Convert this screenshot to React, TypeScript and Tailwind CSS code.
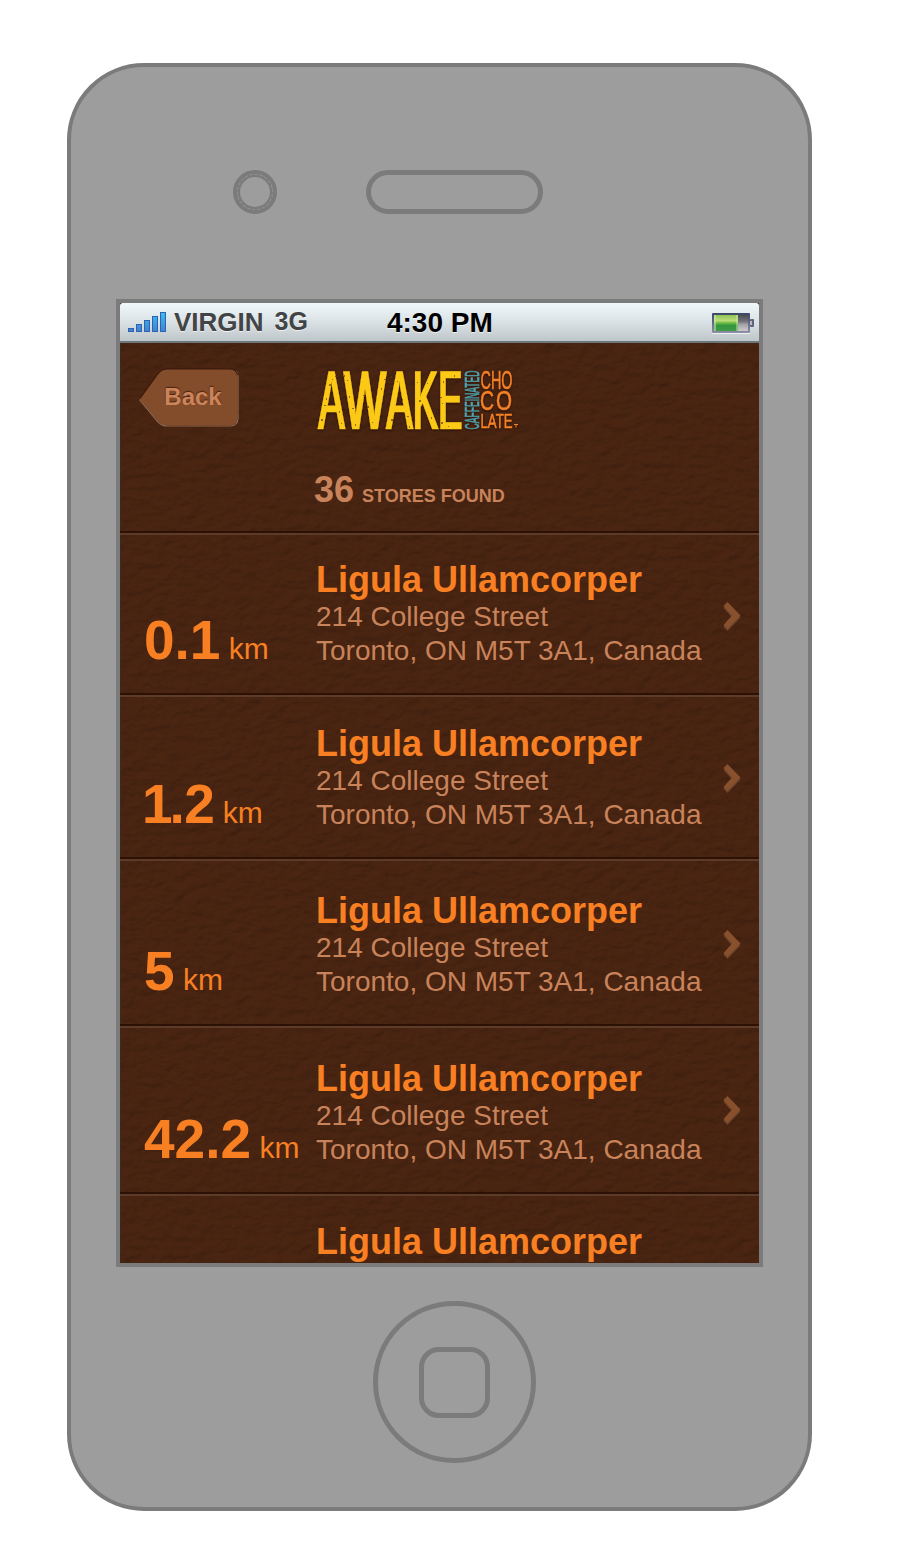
import type { ReactNode } from "react";

type Store = {
  distance: ReactNode;
  height: string;
  pad: string;
  chevron: string;
};

const STORES: Store[] = [
  { distance: "0.1", height: "h-[162px]", pad: "pt-[27px]", chevron: "mt-[67px]" },
  {
    distance: (
      <>
        <span className="-ml-[2px] -tracking-[3px]">1</span>
        <span className="-tracking-[0.5px]">.2</span>
      </>
    ),
    height: "h-[164px]",
    pad: "pt-[29px]",
    chevron: "mt-[67px]",
  },
  { distance: "5", height: "h-[167px]", pad: "pt-[32px]", chevron: "mt-[69px]" },
  { distance: "42.2", height: "h-[168px]", pad: "pt-[33px]", chevron: "mt-[68px]" },
];

function Leather() {
  return (
    <svg className="absolute inset-0 h-full w-full" aria-hidden="true">
      <filter id="leather" x="0" y="0" width="100%" height="100%" colorInterpolationFilters="sRGB">
        <feTurbulence type="fractalNoise" baseFrequency="0.075 0.11" numOctaves="3" seed="8" />
        <feColorMatrix values="0 0 0 0 0  0 0 0 0 0  0 0 0 0 0  1 0 0 0 0" />
        <feDiffuseLighting surfaceScale="1.6" diffuseConstant="1.1" lightingColor="#4b2714">
          <feDistantLight azimuth="240" elevation="66" />
        </feDiffuseLighting>
      </filter>
      <rect width="100%" height="100%" fill="#45210f" />
      <rect width="100%" height="100%" filter="url(#leather)" opacity="0.5" />
    </svg>
  );
}

function Signal() {
  return (
    <svg width="38" height="20" viewBox="0 0 38 20" className="mt-[9px]">
      <defs>
        <linearGradient id="sig" x1="0" y1="0" x2="0" y2="20" gradientUnits="userSpaceOnUse">
          <stop offset="0" stopColor="#3dc0f0" />
          <stop offset="1" stopColor="#3f7fd0" />
        </linearGradient>
      </defs>
      {[4, 8, 12, 16, 20].map((h, i) => (
        <rect key={h} x={i * 8 + 0.5} y={20 - h + 0.5} width="5" height={h - 1} fill="url(#sig)" stroke="#2f62b0" />
      ))}
    </svg>
  );
}

function Battery() {
  return (
    <svg width="43" height="22" viewBox="0 0 43 22" className="mt-[10px] ml-auto">
      <defs>
        <linearGradient id="charge" x1="0" y1="0" x2="0" y2="1">
          <stop offset="0" stopColor="#8fc457" />
          <stop offset="0.35" stopColor="#bbdd79" />
          <stop offset="0.5" stopColor="#6dbb42" />
          <stop offset="0.65" stopColor="#339640" />
          <stop offset="1" stopColor="#3f9b45" />
        </linearGradient>
        <linearGradient id="empty" x1="0" y1="0" x2="0" y2="1">
          <stop offset="0" stopColor="#4c4c50" />
          <stop offset="0.4" stopColor="#737377" />
          <stop offset="0.6" stopColor="#a5a5a8" />
          <stop offset="1" stopColor="#cbcbcd" />
        </linearGradient>
        <linearGradient id="shell" x1="0" y1="0" x2="0" y2="1">
          <stop offset="0" stopColor="#3c4664" />
          <stop offset="1" stopColor="#8e8fa8" />
        </linearGradient>
      </defs>
      <rect x="38" y="6" width="4" height="8" rx="1" fill="#60657b" />
      <rect x="38" y="8" width="2" height="4" fill="#b8bbc5" />
      <rect x="0" y="0" width="38" height="20" rx="1" fill="url(#shell)" />
      <rect x="2" y="2" width="24" height="16" fill="url(#charge)" />
      <rect x="2" y="2" width="2" height="16" fill="#c9edae" opacity="0.55" />
      <rect x="24" y="2" width="2" height="16" fill="#c9edae" opacity="0.45" />
      <rect x="26" y="2" width="10" height="16" fill="url(#empty)" />
      <rect x="0" y="20" width="38" height="1" fill="#ffffff" opacity="0.7" />
    </svg>
  );
}

function BackButton() {
  return (
    <button className="relative mt-[24px] ml-[18px] h-[62px] w-[102px]">
      <svg width="102" height="62" viewBox="0 0 102 62" className="absolute inset-0">
        <path
          d="M1.500 32.500 L20 55 Q24 59 29 59 H92 Q100 59 100 51 V10 Q100 6 98 4"
          fill="none"
          stroke="#8b6853"
          strokeWidth="1.200"
        />
        <path
          d="M1.500 32 L20 6.500 Q24 2 29 2 H92 Q99.500 2 99.500 10 V50 Q99.500 58.500 92 58.500 H29 Q24 58.500 20 54 Z"
          fill="#834c2b"
        />
        <path d="M2 31.500 L20 6.500 Q24 2 29 2 H92 Q98 2 99.500 8" fill="none" stroke="#3a190a" strokeWidth="1.200" />
      </svg>
      <span className="relative left-[4px] text-[24px] leading-[24px] font-bold text-[#cb845b] [text-shadow:0_-1px_1px_#4a230d]">
        Back
      </span>
    </button>
  );
}

const SPECKS = [
  [13, 13], [16, 8], [10, 27], [8, 34], [23, 40], [25, 52], [5, 48], [31, 9], [33, 25], [36, 37], [39, 53],
  [47, 24], [51, 35], [56, 51], [65, 17], [68, 8], [75, 5], [71, 38], [75, 48], [81, 10], [86, 28], [91, 45],
  [93, 55], [101, 11], [103, 29], [111, 12], [115, 46], [124, 26], [127, 10], [126, 32], [125, 51], [132, 55],
  [138, 4], [19, 5], [28, 4], [88, 6],
];

function Logo() {
  const letters = [
    { c: "A", x: 2.5, w: 26 },
    { c: "W", x: 28, w: 42 },
    { c: "A", x: 70.5, w: 26 },
    { c: "K", x: 97, w: 25 },
    { c: "E", x: 122.5, w: 23.5 },
  ];
  return (
    <svg
      width="206"
      height="66"
      viewBox="0 0 206 66"
      className="mt-[26px] ml-[76px] overflow-visible [filter:drop-shadow(0_1px_1px_#2b1005)]"
      fontFamily="'Liberation Sans', Arial, sans-serif"
    >
      <filter id="widen" x="-5%" y="-5%" width="110%" height="110%">
        <feMorphology operator="dilate" radius="1 0.01" />
      </filter>
      <g fill="#fcc917" stroke="#fcc917" strokeWidth="0.600" strokeLinejoin="round" fontSize="83" filter="url(#widen)">
        {letters.map((l) => (
          <text key={l.x} x={l.x} y="60" textLength={l.w} lengthAdjust="spacingAndGlyphs">
            {l.c}
          </text>
        ))}
      </g>
      {SPECKS.map(([x, y], i) => (
        <rect key={i} x={x} y={y + 2} width={i % 3 ? 1 : 2} height={i % 2 ? 1 : 2} fill="#6b4310" opacity="0.7" />
      ))}
      <text
        transform="translate(163 60.500) rotate(-90)"
        fontSize="20"
        fill="#4fa3b0"
        stroke="#4fa3b0"
        strokeWidth="0.700"
        textLength="59"
        lengthAdjust="spacingAndGlyphs"
      >
        CAFFEINATED
      </text>
      <g fill="#f58228" stroke="#f58228" strokeWidth="0.600">
        <text x="164.500" y="19.500" fontSize="25" textLength="32" lengthAdjust="spacingAndGlyphs">
          CHO
        </text>
        <text x="164" y="41" fontSize="27" textLength="14" lengthAdjust="spacingAndGlyphs">
          C
        </text>
        <text x="180" y="41" fontSize="27" textLength="16" lengthAdjust="spacingAndGlyphs">
          O
        </text>
        <text x="164.500" y="59" fontSize="20.500" textLength="32" lengthAdjust="spacingAndGlyphs">
          LATE
        </text>
        <path d="M198 55.500 H202 M200 55.500 V58.500" strokeWidth="1" />
      </g>
    </svg>
  );
}

function Chevron() {
  return (
    <svg width="18" height="30" viewBox="0 0 18 30">
      <path d="M4.500 2 L17.500 15.500 L4.500 29 L0.500 25 L9 15.500 L0.500 6 Z" fill="#69432b" />
      <path d="M4.500 0 L17.500 13.500 L4.500 27 L0.500 23 L9 13.500 L0.500 4 Z" fill="#88502d" />
    </svg>
  );
}

function Divider() {
  return (
    <div className="h-[4px] shrink-0">
      <div className="h-[2px] bg-[#2c1104]" />
      <div className="h-[2px] bg-[#5d3b29]" />
    </div>
  );
}

function StoreTitle() {
  return <h2 className="text-[36px] leading-[36px] font-bold text-[#f88023]">Ligula Ullamcorper</h2>;
}

function StoreRow({ store }: { store: Store }) {
  return (
    <li className={`flex flex-col ${store.height}`}>
      <Divider />
      <div className="flex min-h-0 flex-1">
        <div className={`w-[196px] shrink-0 pl-[24px] whitespace-nowrap text-[#f88023] ${store.pad}`}>
          <p className="mt-[50px] text-[30px] leading-[56px]">
            <span className="text-[55px] font-bold">{store.distance}</span> km
          </p>
        </div>
        <div className={`w-[404px] shrink-0 whitespace-nowrap ${store.pad}`}>
          <StoreTitle />
          <p className="mt-[2px] text-[28px] leading-[34px] text-[#c9835a]">
            214 College Street
            <br />
            Toronto, ON M5T 3A1, Canada
          </p>
        </div>
        <div className={`ml-[3px] ${store.chevron}`}>
          <Chevron />
        </div>
      </div>
    </li>
  );
}

function StatusBar() {
  return (
    <div className="relative flex h-[40px] shrink-0 rounded-t-[3px] border-b-2 border-[#6c777c] bg-linear-to-b from-[#f0f8fb] via-[#dbe2e6] to-[#bec6ca] pr-[4px] pl-[8px] font-bold text-[#424446] [text-shadow:0_1px_0_#ffffffaa]">
      <Signal />
      <span className="mt-[4px] ml-[8px] text-[26px] leading-[30px]">VIRGIN</span>
      <span className="mt-[3px] ml-[11px] text-[25px] leading-[30px]">3G</span>
      <span className="mt-[5px] ml-[79px] text-[28px] leading-[30px] text-black">4:30 PM</span>
      <Battery />
    </div>
  );
}

function Screen() {
  return (
    <div className="relative mt-[85px] ml-[45px] h-[968px] w-[647px] overflow-hidden border-4 border-[#7b7b7b] bg-[#472311]">
      <Leather />
      <div className="relative flex h-full flex-col shadow-[inset_1px_0_0_#3a2a22]">
        <StatusBar />
        <header className="h-[188px] shrink-0">
          <div className="flex h-[120px] items-start">
            <BackButton />
            <Logo />
          </div>
          <p className="pt-[9px] pl-[194px] text-[18px] leading-[36px] font-bold text-[#c9835a]">
            <span className="text-[36px]">36</span>
            <span className="ml-[8px]">STORES FOUND</span>
          </p>
        </header>
        <ul>
          {STORES.map((s, i) => (
            <StoreRow key={i} store={s} />
          ))}
          <li>
            <Divider />
            <div className="pt-[28px] pl-[196px]">
              <StoreTitle />
            </div>
          </li>
        </ul>
      </div>
    </div>
  );
}

export default function App() {
  return (
    <div className="h-[1568px] w-[909px] overflow-hidden bg-white pt-[63px] pl-[67px] font-['Liberation_Sans',Arial,sans-serif]">
      <div className="h-[1448px] w-[745px] rounded-[77px] border-4 border-[#7b7b7b] bg-[#9d9d9d]">
        <div className="flex pt-[103px] pl-[162px]">
          <div className="h-[44px] w-[44px] rounded-full border-[4px] border-[#7b7b7b]">
            <div className="h-full w-full rounded-full border-[3px] border-[#7b7b7b] outline-[0.5px] outline-dashed outline-[#929292] -outline-offset-1" />
          </div>
          <div className="ml-[89px] h-[44px] w-[177px] rounded-full border-[5px] border-[#7b7b7b]" />
        </div>
        <Screen />
        <div className="mt-[34px] ml-[302px] flex h-[162px] w-[163px] items-center justify-center rounded-full border-[5px] border-[#7b7b7b]">
          <div className="h-[71px] w-[71px] rounded-[20px] border-[5px] border-[#7b7b7b]" />
        </div>
      </div>
    </div>
  );
}
